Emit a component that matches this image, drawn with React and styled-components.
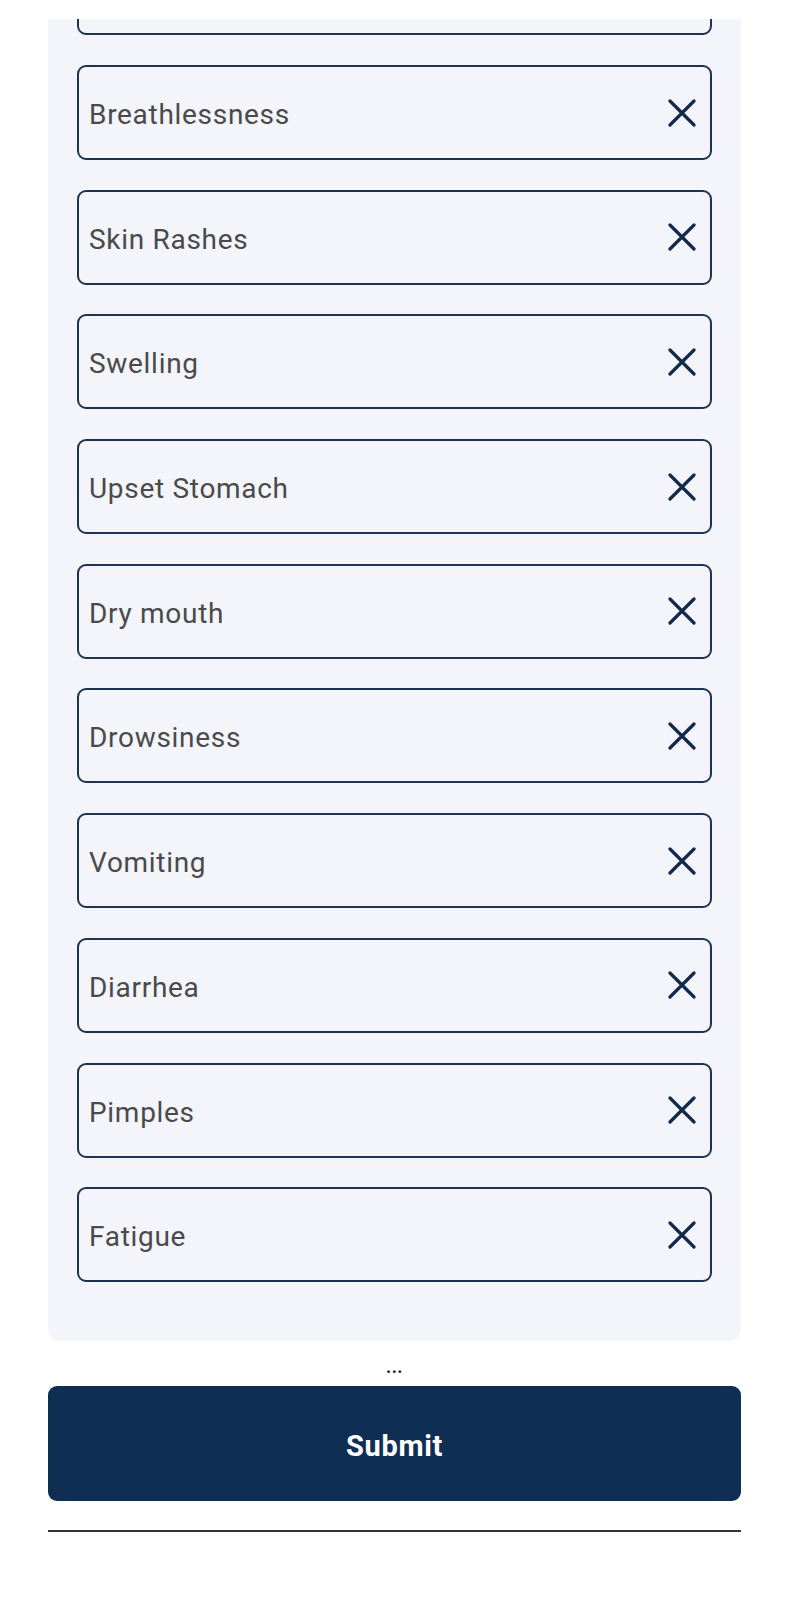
import React from 'react';
import styled, { createGlobalStyle } from 'styled-components';

const GlobalStyle = createGlobalStyle`
  html, body {
    margin: 0;
    padding: 0;
    background: #ffffff;
  }
  body {
    font-family: Roboto, "Noto Sans", "Liberation Sans", sans-serif;
    -webkit-font-smoothing: antialiased;
  }
`;

const symptoms = [
  'Breathlessness',
  'Skin Rashes',
  'Swelling',
  'Upset Stomach',
  'Dry mouth',
  'Drowsiness',
  'Vomiting',
  'Diarrhea',
  'Pimples',
  'Fatigue',
];

// Outer page wrapper
const Page = styled.div`
  width: 790px;
  min-height: 1599px;
  box-sizing: border-box;
  padding: 19px 49px 0 48px;
  display: flex;
  flex-direction: column;
`;

// Light card holding the symptom fields (scrolled, so the top is cut)
const Panel = styled.div`
  background: #f3f5fa;
  border-radius: 0 0 12px 12px;
  padding: 0 29px 59px 29px;
  overflow: hidden;
`;

const List = styled.div`
  display: flex;
  flex-direction: column;
  gap: 29.7px;
  margin-top: -78.7px;
`;

// One symptom input row
const Field = styled.div`
  height: 95px;
  box-sizing: border-box;
  border: 2px solid #1d3350;
  border-radius: 9px;
  display: flex;
  align-items: center;
  justify-content: space-between;
  padding: 0 13px 0 10px;
`;

const Label = styled.span`
  font-size: 28px;
  letter-spacing: 0.7px;
  color: #4a4a4c;
  padding-top: 4px;
`;

const RemoveButton = styled.button`
  border: none;
  background: none;
  padding: 0;
  width: 30px;
  height: 30px;
  display: flex;
  align-items: center;
  justify-content: center;
  cursor: pointer;
`;

const Dots = styled.div`
  height: 45px;
  display: flex;
  align-items: center;
  justify-content: center;
  font-size: 18px;
  font-weight: 700;
  letter-spacing: 0.5px;
  color: #1a1a1a;
  padding-top: 6px;
  box-sizing: border-box;
`;

const SubmitButton = styled.button`
  height: 115px;
  width: 100%;
  border: none;
  border-radius: 9px;
  background: #0f2e53;
  color: #ffffff;
  font-family: Roboto, "Noto Sans", sans-serif;
  font-weight: 700;
  font-size: 29px;
  letter-spacing: 0.7px;
  padding-top: 5px;
  cursor: pointer;
`;

const Divider = styled.hr`
  margin: 29px 0 0 0;
  border: none;
  height: 2px;
  background: #2f3338;
`;

const CloseIcon = () => (
  <svg width="28" height="28" viewBox="0 0 28 28" fill="none">
    <path d="M2 2 L26 26 M26 2 L2 26" stroke="#12294a" strokeWidth="3.2" strokeLinecap="round" />
  </svg>
);

export default function App() {
  return (
    <>
      <GlobalStyle />
      <Page>
        <Panel>
          <List>
            <Field aria-hidden="true" />
            {symptoms.map((s) => (
              <Field key={s}>
                <Label>{s}</Label>
                <RemoveButton aria-label={`Remove ${s}`}>
                  <CloseIcon />
                </RemoveButton>
              </Field>
            ))}
          </List>
        </Panel>
        <Dots>...</Dots>
        <SubmitButton>Submit</SubmitButton>
        <Divider />
      </Page>
    </>
  );
}
